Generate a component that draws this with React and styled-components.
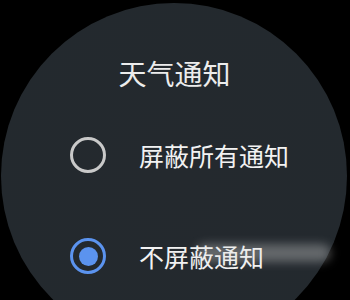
import React from "react";
import styled, { createGlobalStyle } from "styled-components";

const Global = createGlobalStyle`
  html, body {
    margin: 0;
    padding: 0;
    background: #000;
    overflow: hidden;
  }
  body {
    font-family: "Noto Sans CJK SC", "Noto Sans", sans-serif;
  }
`;

const Page = styled.div`
  width: 350px;
  height: 300px;
  background: #000;
  overflow: hidden;
`;

const Watch = styled.div`
  width: 346px;
  height: 346px;
  margin: 3px 0 0 1px;
  border-radius: 50%;
  background: radial-gradient(circle at 50% 50%, #24292e 0%, #23292e 85%, #2a3035 100%);
  display: flex;
  flex-direction: column;
  padding-top: 56px;
  box-sizing: border-box;
  position: relative;
`;

const Title = styled.div`
  text-align: center;
  color: #ececec;
  font-size: 28px;
  line-height: 28px;
  margin-left: 1px;
`;

const List = styled.div`
  display: flex;
  flex-direction: column;
  gap: 65px;
  margin-top: 50px;
  padding-left: 69px;
`;

const Row = styled.div`
  display: flex;
  align-items: center;
  height: 36px;
  gap: 33px;
  position: relative;
`;

const Radio = styled.span`
  width: 36px;
  height: 36px;
  box-sizing: border-box;
  border-radius: 50%;
  border: 3.5px solid ${p => (p.checked ? "#5b93ef" : "#c9c9c9")};
  display: flex;
  align-items: center;
  justify-content: center;
  flex: none;

  &::after {
    content: "";
    display: ${p => (p.checked ? "block" : "none")};
    width: 19px;
    height: 19px;
    border-radius: 50%;
    background: #5b93ef;
  }
`;

const Label = styled.span`
  color: #f2f2f2;
  font-size: 25px;
  line-height: 36px;
`;

const Smudge = styled.span`
  position: absolute;
  left: 126px;
  top: 6px;
  width: 135px;
  height: 18px;
  border-radius: 9px;
  background: rgba(220, 220, 220, 0.35);
  filter: blur(5px);
  pointer-events: none;
`;

export default function App() {
  const [choice, setChoice] = React.useState(1);
  const options = ["屏蔽所有通知", "不屏蔽通知"];

  return (
    <Page>
      <Global />
      <Watch>
        <Title>天气通知</Title>
        <List>
          {options.map((text, i) => (
            <Row key={text} onClick={() => setChoice(i)}>
              <Radio checked={choice === i} />
              <Label>{text}</Label>
              {i === 1 && <Smudge />}
            </Row>
          ))}
        </List>
      </Watch>
    </Page>
  );
}
